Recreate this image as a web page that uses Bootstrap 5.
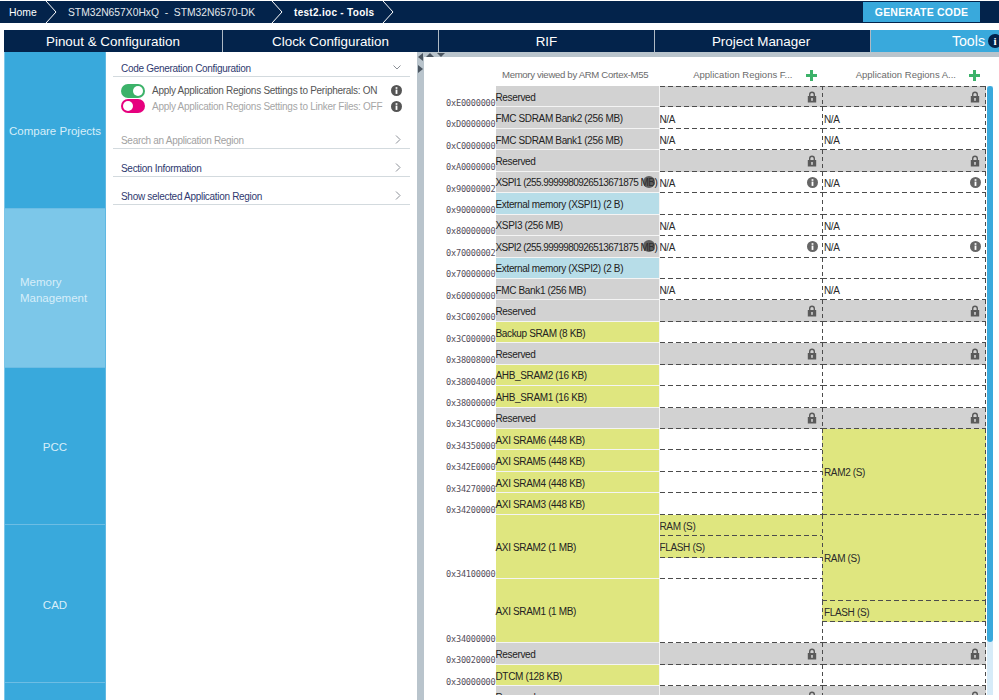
<!DOCTYPE html>
<html lang="en">
<head>
<meta charset="utf-8">
<title>STM32CubeMX Tools</title>
<link href="https://cdn.jsdelivr.net/npm/bootstrap@5.3.0/dist/css/bootstrap.min.css" rel="stylesheet">
<style>
html,body{height:700px;overflow:hidden;background:#fff;font-family:"Liberation Sans",Arial,sans-serif;}
.app-shell{width:999px;height:700px;overflow:hidden;}
.crumb-bar{height:22px;margin-top:1px;background:#03234b;color:#fff;font-size:10.4px;}
.crumb-item{height:22px;line-height:23px;white-space:nowrap;}
.crumb-home{width:45px;padding-left:9px;}
.crumb-device{width:214px;padding-left:11px;font-size:10.3px;color:#e4e9ee;}
.crumb-file{width:99px;padding-left:11px;font-weight:700;font-size:10px;letter-spacing:.3px;}
.crumb-sep{width:12px;height:22px;flex:none;}
.gen-btn{width:117px;height:20px;margin-right:19px;background:#39a9dc;color:#fff;font-size:10.5px;font-weight:700;letter-spacing:.2px;line-height:20px;text-align:center;}
.tab-bar{height:22px;margin:7px 0 0 4px;background:#03234b;color:#fff;font-size:13.4px;line-height:23px;}
.tab-cell{text-align:center;border-right:1px solid #aeb9c4;white-space:nowrap;}
.tab-a{width:219px;}
.tab-b{width:216px;}
.tab-c{width:216px;}
.tab-d{width:216px;padding-right:3px;}
.tab-e{flex:1;background:#39a9dc;border:0;text-align:right;padding-right:14px;position:relative;font-size:14.2px;}
.tab-info{display:inline-block;position:absolute;right:-3px;top:4px;width:14px;height:14px;border-radius:50%;background:#03234b;font:700 11px/14px "Liberation Serif",serif;text-align:center;}
.main-area{height:648px;}
.side-rail{width:102px;margin-left:4px;flex:none;color:#d7eef9;font-size:11.5px;background:#39a9dc;border-left:1px solid #7cc5e8;border-right:1px solid #5fb8e2;}
.rail-item{background:#39a9dc;display:flex;align-items:center;justify-content:center;border-bottom:1px solid #6dbde4;padding-top:4px;}
.rail-compare{height:157px;}
.rail-memory{height:159px;background:#7cc7e9;justify-content:flex-start;padding-left:15px;line-height:16px;}
.rail-pcc{height:157px;}
.rail-cad{height:158px;}
.conf-panel{width:311px;flex:none;padding:5px 7px 0 7px;background:#fff;}
.conf-head{height:20px;border-bottom:1.5px solid #d3dade;padding:4px 9px 0 8px;font-size:10px;letter-spacing:-.3px;color:#2f3a70;}
.conf-head svg{margin-top:-2px;}
.conf-dim{color:#a2a2a2;}
.conf-gap{margin-top:13px;}
.conf-gap2{margin-top:8px;}
.switch-row{height:15.5px;padding-left:8px;padding-right:8px;font-size:10px;letter-spacing:-.27px;color:#555;white-space:nowrap;}
.switch-row.is-off{color:#a6a6a6;}
.switch-block{padding-top:6px;height:39px;}
.tgl{width:24px;height:14px;border-radius:7px;position:relative;flex:none;margin-right:7px;}
.tgl::after{content:"";position:absolute;top:2px;width:10px;height:10px;border-radius:50%;background:#fff;}
.tgl-on{background:#3cb269;}
.tgl-on::after{right:2px;}
.tgl-off{background:#e6007e;}
.tgl-off::after{left:2px;}
.splitter{width:7px;flex:none;background:#b9c4cc;position:relative;}
.tri{position:absolute;width:0;height:0;}
.tri-left{left:1px;top:1px;border-top:4.5px solid transparent;border-bottom:4.5px solid transparent;border-right:5px solid #4a5560;}
.tri-right{left:1px;top:13px;border-top:4.5px solid transparent;border-bottom:4.5px solid transparent;border-left:5px solid #4a5560;}
.map-pane{flex:1;position:relative;overflow:hidden;background:#fff;}
.map-strip{height:5px;background:#b9c4cc;position:relative;}
.tri-up{left:2px;top:1px;border-left:4.5px solid transparent;border-right:4.5px solid transparent;border-bottom:4px solid #4a5560;}
.tri-down{left:13px;top:1px;border-left:4.5px solid transparent;border-right:4.5px solid transparent;border-top:4px solid #4a5560;}
.map-head{height:29px;display:grid;grid-template-columns:235px 163.5px 163.5px;color:#6b6b6b;font-size:9.5px;align-items:center;white-space:nowrap;}
.head-mem{padding-left:78px;padding-top:8px;font-size:9.6px;letter-spacing:-.32px;}
.head-reg{padding-top:8px;display:flex;align-items:center;justify-content:flex-end;padding-right:6px;}
.head-reg svg{margin-left:13px;}
.map-body{height:609px;overflow:hidden;}
.map-grid{display:grid;grid-template-columns:71.5px 164px 162.5px 163.5px;grid-auto-rows:21.44px;width:561.5px;}
.addr-cell{font:8.6px/1 "DejaVu Sans Mono","Liberation Mono",monospace;color:#564f5c;text-align:right;align-self:end;letter-spacing:-.23px;white-space:nowrap;}
.mem-cell{font-size:10px;letter-spacing:-.35px;color:#222;padding-top:2px;border-bottom:1.5px solid #f4f4f4;border-right:1px solid #f4f4f4;display:flex;align-items:center;white-space:nowrap;position:relative;}
.mem-long{letter-spacing:-.56px;}
.mem-gray{background-color:#d2d2d2;}
.mem-green{background-color:#dfe67f;}
.mem-blue{background-color:#b7dde8;}
.reg-cell{font-size:10px;letter-spacing:-.35px;color:#2a2a2a;padding:2px 5px 0 0;display:flex;align-items:center;justify-content:space-between;white-space:nowrap;background-repeat:no-repeat;background-image:repeating-linear-gradient(90deg,#4c4c4c 0 5px,transparent 5px 8px);background-size:100% 1px;background-position:left bottom;}
.reg-cell svg{margin-top:-2px;}
.reg-second{padding-left:2px;padding-right:6px;background-image:repeating-linear-gradient(90deg,#4c4c4c 0 5px,transparent 5px 8px),repeating-linear-gradient(180deg,#4c4c4c 0 4px,transparent 4px 7px),repeating-linear-gradient(180deg,#4c4c4c 0 4px,transparent 4px 7px);background-size:100% 1px,1px 100%,1px 100%;background-position:left bottom,left top,right top;}
.reg-gray{background-color:#d2d2d2;}
.reg-green{background-color:#dfe67f;}
.reg-cell .reg-info{margin-right:-1px;}
.map-topline{position:absolute;left:235.500px;top:34px;width:326px;height:1px;background-image:repeating-linear-gradient(90deg,#4c4c4c 0 5px,transparent 5px 8px);}
.spot{position:absolute;left:147px;top:4px;width:12px;height:12px;border-radius:50%;background:rgba(50,50,50,.72);}
.map-scroll{position:absolute;left:563px;top:34px;width:6px;bottom:5px;background:#d6ebf8;}
.map-thumb{height:556px;background:#39a9dc;border-radius:3px;}
</style>
</head>
<body>
<div class="app-shell d-flex flex-column">
  <div class="crumb-bar d-flex align-items-center">
    <div class="crumb-item crumb-home">Home</div>
    <svg class="crumb-sep" viewBox="0 0 12 22"><path d="M1 0l10 11L1 22" fill="none" stroke="#fff" stroke-width="1"/></svg>
    <div class="crumb-item crumb-device">STM32N657X0HxQ&nbsp; -&nbsp; STM32N6570-DK</div>
    <svg class="crumb-sep" viewBox="0 0 12 22"><path d="M1 0l10 11L1 22" fill="none" stroke="#fff" stroke-width="1"/></svg>
    <div class="crumb-item crumb-file">test2.ioc - Tools</div>
    <svg class="crumb-sep" viewBox="0 0 12 22"><path d="M1 0l10 11L1 22" fill="none" stroke="#fff" stroke-width="1"/></svg>
    <div class="gen-btn ms-auto">GENERATE CODE</div>
  </div>
  <div class="tab-bar d-flex">
    <div class="tab-cell tab-a">Pinout &amp; Configuration</div>
    <div class="tab-cell tab-b">Clock Configuration</div>
    <div class="tab-cell tab-c">RIF</div>
    <div class="tab-cell tab-d">Project Manager</div>
    <div class="tab-cell tab-e">Tools<span class="tab-info">i</span></div>
  </div>
  <div class="main-area d-flex">
    <div class="side-rail">
      <div class="rail-item rail-compare">Compare Projects</div>
      <div class="rail-item rail-memory">Memory<br>Management</div>
      <div class="rail-item rail-pcc">PCC</div>
      <div class="rail-item rail-cad">CAD</div>
    </div>
    <div class="conf-panel">
      <div class="conf-head d-flex justify-content-between align-items-center"><span>Code Generation Configuration</span><svg width="8" height="5" viewBox="0 0 8 5"><path d="M.5 .5L4 4l3.500-3.500" fill="none" stroke="#8b8f96" stroke-width="1"/></svg></div>
      <div class="switch-block">
        <div class="switch-row d-flex align-items-center"><span class="tgl tgl-on"></span><span class="flex-grow-1">Apply Application Regions Settings to Peripherals: ON</span><svg width="11" height="11" viewBox="0 0 11 11"><circle cx="5.500" cy="5.500" r="5.500" fill="#555"/><rect x="4.600" y="4.600" width="1.800" height="4.300" fill="#fff"/><rect x="4.600" y="2.200" width="1.800" height="1.600" fill="#fff"/></svg></div>
        <div class="switch-row is-off d-flex align-items-center"><span class="tgl tgl-off"></span><span class="flex-grow-1">Apply Application Regions Settings to Linker Files: OFF</span><svg width="11" height="11" viewBox="0 0 11 11"><circle cx="5.500" cy="5.500" r="5.500" fill="#555"/><rect x="4.600" y="4.600" width="1.800" height="4.300" fill="#fff"/><rect x="4.600" y="2.200" width="1.800" height="1.600" fill="#fff"/></svg></div>
      </div>
      <div class="conf-head conf-dim conf-gap d-flex justify-content-between align-items-center"><span>Search an Application Region</span><svg width="6" height="9" viewBox="0 0 6 9"><path d="M1 .5l4 4-4 4" fill="none" stroke="#8b8f96" stroke-width="1"/></svg></div>
      <div class="conf-head conf-gap2 d-flex justify-content-between align-items-center"><span>Section Information</span><svg width="6" height="9" viewBox="0 0 6 9"><path d="M1 .5l4 4-4 4" fill="none" stroke="#8b8f96" stroke-width="1"/></svg></div>
      <div class="conf-head conf-gap2 d-flex justify-content-between align-items-center"><span>Show selected Application Region</span><svg width="6" height="9" viewBox="0 0 6 9"><path d="M1 .5l4 4-4 4" fill="none" stroke="#8b8f96" stroke-width="1"/></svg></div>
    </div>
    <div class="splitter"><i class="tri tri-left"></i><i class="tri tri-right"></i></div>
    <div class="map-pane">
      <div class="map-strip"><i class="tri tri-up"></i><i class="tri tri-down"></i></div>
      <div class="map-head">
        <div class="head-mem">Memory viewed by ARM Cortex-M55</div>
        <div class="head-reg">Application Regions F...<svg width="11" height="11" viewBox="0 0 11 11"><path d="M4 0h3v4h4v3H7v4H4V7H0V4h4z" fill="#3cb269"/></svg></div>
        <div class="head-reg">Application Regions A...<svg width="11" height="11" viewBox="0 0 11 11"><path d="M4 0h3v4h4v3H7v4H4V7H0V4h4z" fill="#3cb269"/></svg></div>
      </div>
      <div class="map-body"><div class="map-grid" id="mapGrid"></div></div>
      <div class="map-topline"></div>
      <div class="map-scroll"><div class="map-thumb"></div></div>
    </div>
  </div>
</div>
<svg width="0" height="0" class="position-absolute"><defs>
<symbol id="ic-lock" viewBox="0 0 10 12"><path d="M2 5V3.500a3 3 0 0 1 6 0V5h1.200v6.500H.8V5zm1.400 0h3.200V3.500a1.600 1.600 0 0 0-3.200 0z" fill="#5a5a5a"/><rect x="4.200" y="7" width="1.600" height="2.800" fill="#d2d2d2"/></symbol>
<symbol id="ic-info" viewBox="0 0 11 11"><circle cx="5.500" cy="5.500" r="5.500" fill="#666"/><rect x="4.600" y="4.600" width="1.800" height="4.300" fill="#fff"/><rect x="4.600" y="2.200" width="1.800" height="1.600" fill="#fff"/></symbol>
</defs></svg>
<script>
var lock='<svg width="10" height="12"><use href="#ic-lock"/></svg>';
var info='<svg class="reg-info" width="11" height="11"><use href="#ic-info"/></svg>';
var rows=[
['0xE0000000','Reserved','g',1,'L','L'],
['0xD0000000','FMC SDRAM Bank2 (256 MB)','g',1,'N','N'],
['0xC0000000','FMC SDRAM Bank1 (256 MB)','g',1,'N','N'],
['0xA0000000','Reserved','g',1,'L','L'],
['0x90000002','XSPI1 (255.9999980926513671875 MB)','g',1,'I','I',1],
['0x90000000','External memory (XSPI1) (2 B)','b',1,'','' ],
['0x80000000','XSPI3 (256 MB)','g',1,'N','N'],
['0x70000002','XSPI2 (255.9999980926513671875 MB)','g',1,'I','I',1],
['0x70000000','External memory (XSPI2) (2 B)','b',1,'',''],
['0x60000000','FMC Bank1 (256 MB)','g',1,'N','N'],
['0x3C002000','Reserved','g',1,'L','L'],
['0x3C000000','Backup SRAM (8 KB)','y',1,'',''],
['0x38008000','Reserved','g',1,'L','L'],
['0x38004000','AHB_SRAM2 (16 KB)','y',1,'',''],
['0x38000000','AHB_SRAM1 (16 KB)','y',1,'',''],
['0x343C0000','Reserved','g',1,'L','L'],
['0x34350000','AXI SRAM6 (448 KB)','y',1,'',null],
['0x342E0000','AXI SRAM5 (448 KB)','y',1,'',null],
['0x34270000','AXI SRAM4 (448 KB)','y',1,'',null],
['0x34200000','AXI SRAM3 (448 KB)','y',1,'',null],
['0x34100000','AXI SRAM2 (1 MB)','y',3],
['0x34000000','AXI SRAM1 (1 MB)','y',3],
['0x30020000','Reserved','g',1,'L','L'],
['0x30000000','DTCM (128 KB)','y',1,'',''],
['','Reserved','g',1,'L','L']];
var h='',r=1;
function reg(kind,col,second){
  var c='reg-cell'+(second?' reg-second':''),t='';
  if(kind==='L'){c+=' reg-gray';t='<span></span>'+lock;}
  if(kind==='N'){t='N/A';}
  if(kind==='I'){t='<span>N/A</span>'+info;}
  return '<div class="'+c+'" style="grid-column:'+col+';grid-row:'+r+'">'+t+'</div>';
}
function span(label,green,col,second,start,len){
  var c='reg-cell'+(second?' reg-second':'')+(green?' reg-green':'');
  return '<div class="'+c+'" style="grid-column:'+col+';grid-row:'+start+' / span '+len+'">'+label+'</div>';
}
rows.forEach(function(x){
  var map={g:'mem-gray',b:'mem-blue',y:'mem-green'};
  h+='<div class="addr-cell" style="grid-column:1;grid-row:'+r+' / span '+x[3]+'">'+x[0]+'</div>';
  h+='<div class="mem-cell '+map[x[2]]+(x[6]?' mem-long':'')+'" style="grid-column:2;grid-row:'+r+' / span '+x[3]+'">'+x[1]+(x[6]?'<i class="spot"></i>':'')+'</div>';
  if(x[3]===1){
    h+=reg(x[4],3,false);
    if(x[5]!==null)h+=reg(x[5],4,true);
  }
  r+=x[3];
});
/* Regions that span several address rows */
h+=span('RAM2 (S)',true,4,true,17,4);
h+=span('RAM (S)',true,3,false,21,1);
h+=span('FLASH (S)',true,3,false,22,1);
h+=span('',false,3,false,23,1);
h+=span('',false,3,false,24,3);
h+=span('RAM (S)',true,4,true,21,4);
h+=span('FLASH (S)',true,4,true,25,1);
h+=span('',false,4,true,26,1);
document.getElementById('mapGrid').innerHTML=h;
</script>
<script src="https://cdn.jsdelivr.net/npm/bootstrap@5.3.0/dist/js/bootstrap.bundle.min.js"></script>
</body>
</html>
